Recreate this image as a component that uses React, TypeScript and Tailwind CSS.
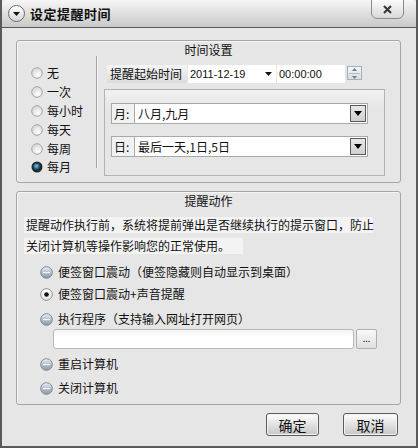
import React from "react";

function ClassicRadio({ checked }: { checked?: boolean }) {
  return (
    <svg width="12" height="12" viewBox="0 0 12 12" className="shrink-0">
      <defs>
        <radialGradient id="cr-off" cx="0.6" cy="0.7" r="0.7">
          <stop offset="0" stopColor="#ffffff" />
          <stop offset="1" stopColor="#d4d4d4" />
        </radialGradient>
        <radialGradient id="cr-on" cx="0.4" cy="0.35" r="0.6">
          <stop offset="0" stopColor="#7fc4e8" />
          <stop offset="0.6" stopColor="#1f6f9e" />
          <stop offset="1" stopColor="#0b2c44" />
        </radialGradient>
      </defs>
      {checked ? (
        <>
          <circle cx="6" cy="6" r="5.5" fill="#2a2a2a" />
          <circle cx="6" cy="6" r="3.6" fill="url(#cr-on)" />
        </>
      ) : (
        <circle cx="6" cy="6" r="5.3" fill="url(#cr-off)" stroke="#a6a6a6" strokeWidth="1" />
      )}
    </svg>
  );
}

function GlossRadio({ checked }: { checked?: boolean }) {
  return (
    <svg width="13" height="13" viewBox="0 0 13 13" className="shrink-0">
      <defs>
        <linearGradient id="gr-off" x1="0" y1="0" x2="0" y2="1">
          <stop offset="0" stopColor="#eef2f6" />
          <stop offset="0.5" stopColor="#b4bfca" />
          <stop offset="1" stopColor="#8a98a6" />
        </linearGradient>
        <linearGradient id="gr-on" x1="0" y1="0" x2="0" y2="1">
          <stop offset="0" stopColor="#ffffff" />
          <stop offset="1" stopColor="#e4e4e4" />
        </linearGradient>
      </defs>
      {checked ? (
        <>
          <circle cx="6.5" cy="6.5" r="5.8" fill="url(#gr-on)" stroke="#8c8c8c" strokeWidth="1" />
          <circle cx="6.5" cy="6.5" r="2.3" fill="#111" />
        </>
      ) : (
        <>
          <circle cx="6.5" cy="6.5" r="5.8" fill="url(#gr-off)" stroke="#7d8894" strokeWidth="1" />
          <rect x="3" y="6" width="7" height="1.2" fill="#ffffff" opacity="0.8" />
        </>
      )}
    </svg>
  );
}

function ComboRow({ label, value }: { label: string; value: string }) {
  return (
    <div className="flex h-[21px] ml-[6px]">
      <div className="w-[24px] h-full border border-[#a9a9a9] bg-[#f1f1f1] flex items-center pl-[2px] text-[12px]">
        {label}
      </div>
      <div className="w-[233px] h-full border border-[#a9a9a9] border-l-0 bg-white flex items-center justify-between pl-[3px] pr-[1px]">
        <span className="text-[12px]">{value}</span>
        <div className="w-[16px] h-[17px] border border-[#5a5a5a] bg-gradient-to-b from-[#e8e8e8] to-[#cfcfcf] flex items-center justify-center">
          <svg width="8" height="5" viewBox="0 0 8 5">
            <path d="M0 0h8L4 5z" fill="#000" />
          </svg>
        </div>
      </div>
    </div>
  );
}

export default function App() {
  const freqs = ["无", "一次", "每小时", "每天", "每周", "每月"];

  return (
    <div className='w-[418px] h-[448px] flex flex-col bg-[#e6e6e6] border-x-2 border-b-2 border-[#5a5a5a] font-["Noto_Sans_CJK_SC","Noto_Sans",sans-serif] text-[#111] overflow-hidden'>
      {/* title bar */}
      <div className="relative h-[28px] shrink-0 flex items-center border-b border-[#555] bg-gradient-to-b from-[#f6f6f6] to-[#c9c9c9] rounded-t-[4px]">
        <div className="ml-[6px] w-[17px] h-[17px] rounded-full border border-[#6a6a6a] bg-gradient-to-b from-white to-[#d6d6d6] flex items-center justify-center">
          <svg width="7" height="4" viewBox="0 0 7 4">
            <path d="M0 0h7L3.5 4z" fill="#111" />
          </svg>
        </div>
        <span className="ml-[5px] text-[13px] font-bold tracking-[0.5px]">设定提醒时间</span>
        <div className="absolute right-[12px] top-[-1px] w-[33px] h-[20px] border border-[#8a8a8a] rounded-b-[6px] bg-gradient-to-b from-[#fbfbfb] to-[#d9d9d9] flex items-center justify-center">
          <svg width="9" height="9" viewBox="0 0 9 9">
            <path d="M1 1l7 7M8 1L1 8" stroke="#3a3a3a" strokeWidth="2.2" />
          </svg>
        </div>
      </div>

      {/* time settings group */}
      <div className="ml-[14px] mt-[12px] w-[385px] h-[143px] shrink-0 border border-[#a6a6a6] rounded-[3px] shadow-[inset_1px_1px_0_#f6f6f6] flex flex-col">
        <div className="h-[18px] leading-[18px] text-center text-[12px]">时间设置</div>
        <div className="flex">
          <div className="w-[79px] pl-[14px] pt-[5px] flex flex-col">
            {freqs.map((f, i) => (
              <div key={f} className="h-[18.8px] flex items-center gap-[4px] text-[12px]">
                <ClassicRadio checked={i === 5} />
                <span>{f}</span>
              </div>
            ))}
          </div>
          <div className="mt-[-3px] h-[112px] w-[2px] border-l border-[#a3a3a3] border-r border-r-[#f6f6f6]" />
          <div className="ml-[6px] flex flex-col">
            <div className="mt-[6px] flex h-[18px]">
              <div className="ml-[3px] w-[80px] h-full bg-gradient-to-b from-[#f5f5f5] to-[#dcdcdc] flex items-center pl-[3px] text-[12px]">
                提醒起始时间
              </div>
              <div className="ml-[1px] w-[88px] h-full bg-white flex items-center justify-between pl-[2px] pr-[4px]">
                <span className='text-[11px] font-["Liberation_Sans",sans-serif]'>2011-12-19</span>
                <svg width="7" height="4" viewBox="0 0 7 4">
                  <path d="M0 0h7L3.5 4z" fill="#111" />
                </svg>
              </div>
              <div className="ml-[1px] w-[68px] h-full bg-white flex items-center pl-[2px]">
                <span className='text-[11px] font-["Liberation_Sans",sans-serif]'>00:00:00</span>
              </div>
              <div className="ml-[2px] mt-[1px] w-[15px] h-[14px] border border-[#a7afb8] bg-gradient-to-b from-[#f4f6f8] to-[#d6dce2] flex flex-col items-center justify-center gap-[2px]">
                <svg width="5" height="3" viewBox="0 0 5 3">
                  <path d="M0 3h5L2.5 0z" fill="#6f7f90" />
                </svg>
                <div className="w-[11px] h-px bg-[#b4bcc4]" />
                <svg width="5" height="3" viewBox="0 0 5 3">
                  <path d="M0 0h5L2.5 3z" fill="#6f7f90" />
                </svg>
              </div>
            </div>
            <div className="mt-[6px] w-[281px] h-[87px] border border-[#b3b3b3] bg-gradient-to-b from-[#f2f2f2] to-[#e6e6e6] to-[20%] flex flex-col pt-[13px] gap-[12px]">
              <ComboRow label="月:" value="八月,九月" />
              <ComboRow label="日:" value="最后一天,1日,5日" />
            </div>
          </div>
        </div>
      </div>

      {/* action group */}
      <div className="ml-[14px] mt-[8px] w-[385px] h-[214px] shrink-0 border border-[#a6a6a6] rounded-[3px] shadow-[inset_1px_1px_0_#f6f6f6] flex flex-col">
        <div className="h-[18px] leading-[18px] text-center text-[12px]">提醒动作</div>
        <div className="ml-[7px] mt-[7px] flex flex-col gap-[5px] items-start">
          <div className="w-[349px] h-[16px] leading-[16px] bg-[#f3f3f3] pl-[2px] text-[12px] whitespace-nowrap">
            提醒动作执行前，系统将提前弹出是否继续执行的提示窗口，防止
          </div>
          <div className="w-[219px] h-[16px] leading-[16px] bg-[#f3f3f3] pl-[2px] text-[12px] whitespace-nowrap">
            关闭计算机等操作影响您的正常使用。
          </div>
        </div>
        <div className="ml-[23px] mt-[7px] flex flex-col">
          <div className="h-[22px] flex items-center gap-[5px] text-[12px]">
            <GlossRadio />
            <span>便签窗口震动（便签隐藏则自动显示到桌面）</span>
          </div>
          <div className="h-[22px] flex items-center gap-[5px] text-[12px]">
            <GlossRadio checked />
            <span>便签窗口震动+声音提醒</span>
          </div>
          <div className="mt-[4px] h-[20px] flex items-center gap-[5px] text-[12px]">
            <GlossRadio />
            <span>执行程序（支持输入网址打开网页）</span>
          </div>
          <div className="ml-[13px] flex h-[20px] gap-[2px]">
            <div className="w-[301px] h-full border border-[#b8b8b8] rounded-[3px] bg-gradient-to-b from-[#f4f4f4] to-white to-[40%]" />
            <div className="w-[21px] h-full border border-[#b0b0b0] rounded-[2px] bg-gradient-to-b from-[#fafafa] to-[#dedede] flex items-center justify-center text-[9px] leading-none pb-[2px]">
              ...
            </div>
          </div>
          <div className="mt-[4px] h-[22px] flex items-center gap-[5px] text-[12px]">
            <GlossRadio />
            <span>重启计算机</span>
          </div>
          <div className="mt-[2px] h-[22px] flex items-center gap-[5px] text-[12px]">
            <GlossRadio />
            <span>关闭计算机</span>
          </div>
        </div>
      </div>

      {/* buttons */}
      <div className="mt-[8px] mr-[18px] flex justify-end gap-[24px]">
        <button className="w-[53px] h-[23px] border border-[#5c5c5c] rounded-[3px] bg-gradient-to-b from-white to-[#c6c6c6] text-[14px] leading-none shadow-[inset_0_0_0_1px_#f2f2f2]">
          确定
        </button>
        <button className="w-[55px] h-[23px] border border-[#5c5c5c] rounded-[3px] bg-gradient-to-b from-white to-[#c6c6c6] text-[14px] leading-none shadow-[inset_0_0_0_1px_#f2f2f2]">
          取消
        </button>
      </div>
    </div>
  );
}
